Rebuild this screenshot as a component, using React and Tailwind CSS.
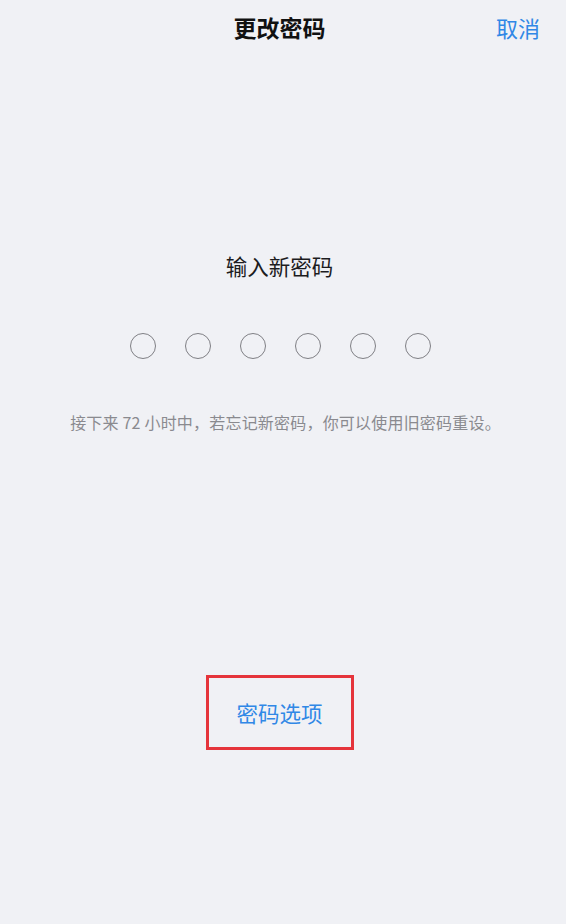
export default function App() {
  const dots = [0, 1, 2, 3, 4, 5];

  return (
    <div
      className="min-h-[924px] w-full bg-[#f0f1f5] text-[#111]"
      style={{ fontFamily: '"Noto Sans CJK SC", "Noto Sans", sans-serif' }}
    >
      <header className="grid h-[54px] grid-cols-[1fr_auto_1fr] items-center pl-[19px] pr-[26px]">
        <div />
        <h1 className="text-[23px] font-bold leading-[28px] text-[#111]">更改密码</h1>
        <button className="justify-self-end text-[22px] leading-[28px] text-[#3088e6]">
          取消
        </button>
      </header>

      <main className="flex flex-col items-center pr-[7px] pt-[198px]">
        <h2 className="text-[21.5px] leading-[28px] text-[#1c1c1e]">输入新密码</h2>

        <div className="ml-[2px] mt-[53px] flex gap-[29px]">
          {dots.map((d) => (
            <span
              key={d}
              className="block h-[26px] w-[26px] rounded-full border-[1.6px] border-[#7f7f84]"
            />
          ))}
        </div>

        <p className="ml-[12px] mt-[52px] text-[16px] leading-[22px] tracking-[0.2px] text-[#8a8a8f]">
          接下来 72 小时中，若忘记新密码，你可以使用旧密码重设。
        </p>

        <div className="mt-[242px] flex h-[75px] w-[148px] items-center justify-center border-[3px] border-[#e5343b]">
          <span className="text-[21.5px] leading-[28px] text-[#3088e6]">密码选项</span>
        </div>
      </main>
    </div>
  );
}
